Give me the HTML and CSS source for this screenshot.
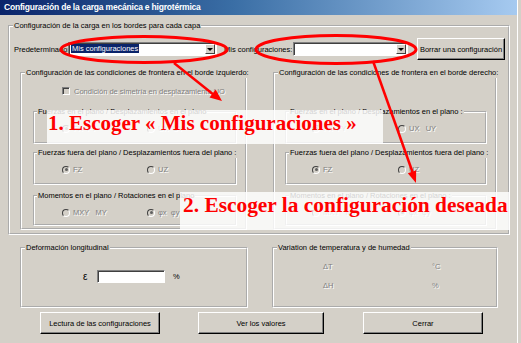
FILE: index.html
```html
<!DOCTYPE html>
<html lang="es">
  <head>
    <meta charset="UTF-8" />
    <title>Configuración de la carga mecánica e higrotérmica</title>
    <link rel="stylesheet" href="styles.css">
  </head>
  <body>
    <div class="window">
      <div class="titlebar">Configuración de la carga mecánica e higrotérmica</div>
      <div class="client">
        <fieldset class="group group--outer">
          <legend>Configuración de la carga en los bordes para cada capa</legend>
          <div class="config-row">
            <span class="label label--preset">Predeterminado:</span>
            <div class="combo combo--preset">
              <span class="combo__value"><span class="combo__selected">Mis configuraciones</span></span>
              <span class="combo__btn"></span>
            </div>
            <span class="label label--mine">Mis configuraciones:</span>
            <div class="combo combo--mine">
              <span class="combo__value"></span>
              <span class="combo__btn"></span>
            </div>
            <button class="btn btn--delete">Borrar una configuración</button>
          </div>

          <div class="edges">
            <!-- left edge -->
            <fieldset class="group group--edge group--left">
              <legend>Configuración de las condiciones de frontera en el borde izquierdo:</legend>
              <div class="edge-body">
                <div class="check-row">
                  <span class="check"></span>
                  <span class="disabled">Condición de simetría en desplazamiento UO</span>
                </div>
                <fieldset class="group group--inner">
                  <legend>Fuerzas en el plano / Desplazamientos en el plano</legend>
                  <div class="radio-row">
                    <span class="option"><span class="radio radio--on"></span><span class="disabled">FX&nbsp;&nbsp;FY</span></span>
                    <span class="option"><span class="radio"></span><span class="disabled">UX&nbsp;&nbsp;UY</span></span>
                  </div>
                </fieldset>
                <fieldset class="group group--inner">
                  <legend>Fuerzas fuera del plano / Desplazamientos fuera del plano :</legend>
                  <div class="radio-row">
                    <span class="option"><span class="radio radio--on"></span><span class="disabled">FZ</span></span>
                    <span class="option"><span class="radio"></span><span class="disabled">UZ</span></span>
                  </div>
                </fieldset>
                <fieldset class="group group--inner group--last">
                  <legend>Momentos en el plano / Rotaciones en el plano</legend>
                  <div class="radio-row">
                    <span class="option"><span class="radio"></span><span class="disabled">MXY&nbsp;&nbsp;&nbsp;MY</span></span>
                    <span class="option"><span class="radio radio--on"></span><span class="disabled">φx&nbsp;&nbsp;φy</span></span>
                  </div>
                </fieldset>
              </div>
            </fieldset>

            <!-- right edge -->
            <fieldset class="group group--edge group--right">
              <legend>Configuración de las condiciones de frontera en el borde derecho:</legend>
              <div class="edge-body">
                <div class="check-row"></div>
                <fieldset class="group group--inner">
                  <legend>Fuerzas en el plano / Desplazamientos en el plano :</legend>
                  <div class="radio-row">
                    <span class="option"><span class="radio radio--on"></span><span class="disabled">FX&nbsp;&nbsp;FY</span></span>
                    <span class="option"><span class="radio"></span><span class="disabled">UX&nbsp;&nbsp;&nbsp;UY</span></span>
                  </div>
                </fieldset>
                <fieldset class="group group--inner">
                  <legend>Fuerzas fuera del plano / Desplazamientos fuera del plano :</legend>
                  <div class="radio-row">
                    <span class="option"><span class="radio radio--on"></span><span class="disabled">FZ</span></span>
                    <span class="option"><span class="radio"></span><span class="disabled">UZ</span></span>
                  </div>
                </fieldset>
                <fieldset class="group group--inner group--last">
                  <legend>Momentos en el plano / Rotaciones en el plano :</legend>
                  <div class="radio-row">
                    <span class="option"><span class="radio"></span><span class="disabled">MXY&nbsp;&nbsp;&nbsp;MY</span></span>
                    <span class="option"><span class="radio radio--on"></span><span class="disabled">φx&nbsp;&nbsp;φy</span></span>
                  </div>
                </fieldset>
              </div>
            </fieldset>
          </div>
        </fieldset>

        <div class="bottom">
          <fieldset class="group group--strain">
            <legend>Deformación longitudinal</legend>
            <div class="strain-row">
              <span class="strain-symbol">ε</span>
              <span class="field"></span>
              <span class="unit">%</span>
            </div>
          </fieldset>
          <fieldset class="group group--thermal">
            <legend>Variation de temperatura y de humedad</legend>
            <div class="thermal-grid">
              <span class="disabled">ΔT</span><span class="disabled">°C</span>
              <span class="disabled">ΔH</span><span class="disabled">%</span>
            </div>
          </fieldset>
        </div>

        <div class="actions">
          <button class="btn btn--read">Lectura de las configuraciones</button>
          <button class="btn btn--values">Ver los valores</button>
          <button class="btn btn--close">Cerrar</button>
        </div>
      </div>
    </div>

    <!-- annotations drawn over the dialog -->
    <div class="callout callout--one">1. Escoger « Mis configuraciones »</div>
    <div class="callout callout--two">2. Escoger la configuración deseada</div>
    <svg class="marks" width="521" height="343" viewBox="0 0 521 343">
      <ellipse cx="144" cy="49.5" rx="83" ry="13" fill="none" stroke="#f00" stroke-width="3" />
      <ellipse cx="336" cy="49.5" rx="80" ry="14" fill="none" stroke="#f00" stroke-width="3" />
      <line x1="174" y1="63" x2="214" y2="95" stroke="#f00" stroke-width="2.5" />
      <polygon points="222,101 209.5,97.4 215.7,89.6" fill="#f00" />
      <line x1="373" y1="61" x2="412.5" y2="172" stroke="#f00" stroke-width="2.5" />
      <polygon points="416,183 407.8,173.2 416.2,170.2" fill="#f00" />
    </svg>
  </body>
</html>
```

FILE: styles.css
```css
* {
  margin: 0;
  padding: 0;
  box-sizing: border-box;
}
body {
  width: 521px;
  height: 343px;
  overflow: hidden;
  position: relative;
  background: #d4d0c8;
  font-family: "Liberation Sans", Arial, sans-serif;
  font-size: 7.5px;
  color: #000;
}
.window {
  width: 518px;
  height: 343px;
  border-right: 1px solid #fff;
}
.titlebar {
  height: 15px;
  line-height: 15px;
  padding-left: 4px;
  background: linear-gradient(to right, #0a246a, #3a6ea5 45%, #a6caf0);
  color: #fff;
  font-weight: bold;
  font-size: 8.5px;
  letter-spacing: -0.2px;
  white-space: nowrap;
}
.client {
  padding: 6px 0 0 8px;
}

/* Group boxes */
.group {
  border: 2px groove #fff;
  min-width: 0;
}
.group legend {
  line-height: 10px;
  padding: 0 1px;
  margin-left: 3px;
  white-space: nowrap;
}
.group--outer {
  width: 502px;
  padding: 7px 0 3px;
}
.config-row {
  display: flex;
  align-items: center;
  height: 22px;
  padding-left: 4px;
}
.label {
  white-space: nowrap;
}
.label--preset {
  width: 54px;
}
.label--mine {
  width: 69px;
  margin-left: 7px;
}

/* Combo boxes */
.combo {
  display: flex;
  align-items: center;
  height: 14px;
  background: #fff;
  border: 1px solid;
  border-color: #808080 #fff #fff #808080;
  box-shadow: inset 1px 1px 0 #404040;
  padding: 1px 1px 1px 2px;
}
.combo--preset {
  width: 149px;
}
.combo--mine {
  width: 115px;
}
.combo__value {
  flex: 1;
  line-height: 10px;
  white-space: nowrap;
}
.combo__selected {
  background: #0a246a;
  color: #fff;
  padding: 0 1px;
}
.combo__btn {
  width: 10px;
  height: 10px;
  background: #d4d0c8;
  border: 1px solid;
  border-color: #fff #404040 #404040 #fff;
  display: flex;
  align-items: center;
  justify-content: center;
}
.combo__btn::after {
  content: "";
  border-left: 3px solid transparent;
  border-right: 3px solid transparent;
  border-top: 3px solid #000;
}

/* Buttons */
.btn {
  font: inherit;
  color: #000;
  background: #d4d0c8;
  height: 22px;
  border: 1px solid;
  border-color: #fff #000 #000 #fff;
  box-shadow: inset -1px -1px 0 #808080;
  white-space: nowrap;
}
.btn--delete {
  width: 88px;
  margin-left: 9px;
}

/* Edge conditions */
.edges {
  display: flex;
  gap: 26px;
  padding: 0 10px;
  margin-top: 8px;
}
.group--edge {
  height: 162px;
}
.group--left {
  width: 227px;
}
.group--right {
  width: 224px;
}
.group--left .edge-body {
  padding: 0 8px 0 11px;
}
.group--right .edge-body {
  padding: 0 8px 0 10px;
}
.check-row {
  display: flex;
  align-items: center;
  gap: 4px;
  height: 26px;
  padding-left: 29px;
  white-space: nowrap;
}
.check {
  width: 8px;
  height: 8px;
  background: #d4d0c8;
  border: 1px solid;
  border-color: #808080 #fff #fff #808080;
  box-shadow: inset 1px 1px 0 #404040;
}
.group--inner {
  height: 37px;
  margin-top: 3px;
}
.group--inner + .group--inner {
  margin-top: 4px;
}
.group--inner.group--last {
  height: 35px;
  margin-top: 6px;
}
.group--inner legend {
  margin-left: 2px;
}
.radio-row {
  display: flex;
  align-items: center;
  height: 23px;
  padding-left: 27px;
}
.group--right .radio-row {
  padding-left: 25px;
}
.option {
  display: flex;
  align-items: center;
  gap: 3px;
  width: 85px;
  white-space: nowrap;
}
.group--right .option {
  width: 86px;
}
.radio {
  position: relative;
  width: 8px;
  height: 8px;
  border-radius: 50%;
  background: #d4d0c8;
  border: 1px solid;
  border-color: #404040 #fff #fff #404040;
}
.radio--on::after {
  content: "";
  position: absolute;
  left: 1.5px;
  top: 1.5px;
  width: 3px;
  height: 3px;
  border-radius: 50%;
  background: #606060;
}
.disabled {
  color: #808080;
  text-shadow: 1px 1px 0 #fff;
}

/* Bottom groups */
.bottom {
  display: flex;
  gap: 24px;
  margin: 8px 0 0 12px;
}
.group--strain {
  width: 228px;
  height: 65px;
}
.group--thermal {
  width: 226px;
  height: 65px;
}
.strain-row {
  display: flex;
  align-items: center;
  height: 24px;
  margin-top: 11px;
  padding-left: 61px;
}
.strain-symbol {
  width: 14px;
  font-size: 10px;
}
.field {
  width: 68px;
  height: 13px;
  background: #fff;
  border: 1px solid;
  border-color: #808080 #fff #fff #808080;
  box-shadow: inset 1px 1px 0 #404040;
}
.unit {
  margin-left: 8px;
}
.thermal-grid {
  display: grid;
  grid-template-columns: 109px auto;
  grid-auto-rows: 10px;
  row-gap: 9px;
  line-height: 10px;
  padding: 9px 0 0 49px;
}

/* Action buttons */
.actions {
  display: flex;
  margin-top: 4px;
  padding-left: 32px;
}
.btn--read {
  width: 120px;
}
.btn--values {
  width: 126px;
  margin-left: 38px;
}
.btn--close {
  width: 120px;
  margin-left: 39px;
}

/* Annotations */
.callout {
  position: absolute;
  background: rgba(255, 255, 255, 0.82);
  color: #f00;
  font-family: "Liberation Serif", serif;
  font-weight: bold;
  font-size: 21px;
  line-height: 27px;
  white-space: nowrap;
}
.callout--one {
  left: 47px;
  top: 110px;
  width: 336px;
  height: 34px;
  padding-left: 1px;
}
.callout--two {
  left: 180px;
  top: 192px;
  width: 330px;
  height: 38px;
  padding-left: 3px;
  font-size: 21.4px;
}
.marks {
  position: absolute;
  left: 0;
  top: 0;
}
```
